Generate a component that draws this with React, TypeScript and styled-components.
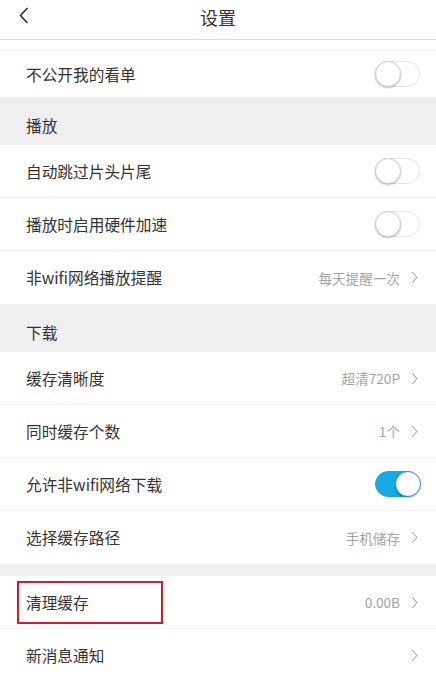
import React from 'react';
import styled, { createGlobalStyle } from 'styled-components';

// Settings screen: one row per option, grouped under grey section headers

type Row =
  | { kind: 'toggle'; label: string; on: boolean }
  | { kind: 'link'; label: string; value?: string; marked?: boolean };

const playRows: Row[] = [
  { kind: 'toggle', label: '自动跳过片头片尾', on: false },
  { kind: 'toggle', label: '播放时启用硬件加速', on: false },
  { kind: 'link', label: '非wifi网络播放提醒', value: '每天提醒一次' },
];

const downloadRows: Row[] = [
  { kind: 'link', label: '缓存清晰度', value: '超清720P' },
  { kind: 'link', label: '同时缓存个数', value: '1个' },
  { kind: 'toggle', label: '允许非wifi网络下载', on: true },
  { kind: 'link', label: '选择缓存路径', value: '手机储存' },
];

const otherRows: Row[] = [
  { kind: 'link', label: '清理缓存', value: '0.00B', marked: true },
  { kind: 'link', label: '新消息通知' },
];

export default function App() {
  const renderRow = (row: Row, last: boolean) => (
    <ItemRow key={row.label} $last={last}>
      <ItemLabel>{row.label}</ItemLabel>
      {row.kind === 'toggle' ? (
        <Switch $on={row.on}>
          <Knob $on={row.on} />
        </Switch>
      ) : (
        <ItemRight>
          {row.value && <ItemValue>{row.value}</ItemValue>}
          <Chevron width="7" height="13" viewBox="0 0 7 13">
            <path d="M1 1l5 5.5L1 12" fill="none" stroke="#a8a8a8" strokeWidth="1.1" />
          </Chevron>
        </ItemRight>
      )}
      {row.kind === 'link' && row.marked && <MarkBox />}
    </ItemRow>
  );

  return (
    <>
      <GlobalStyle />
      <Page>
        <TopBar>
          <BackButton width="10" height="17" viewBox="0 0 10 17">
            <path d="M8.5 1L1.5 8.5l7 7.5" fill="none" stroke="#333" strokeWidth="1.6" />
          </BackButton>
          <Title>设置</Title>
        </TopBar>

        <Stub />
        <ItemRow $last $short>
          <ItemLabel>不公开我的看单</ItemLabel>
          <Switch $on={false}>
            <Knob $on={false} />
          </Switch>
        </ItemRow>

        <SectionHeader>播放</SectionHeader>
        {playRows.map((r, i) => renderRow(r, i === playRows.length - 1))}

        <SectionHeader>下载</SectionHeader>
        {downloadRows.map((r, i) => renderRow(r, i === downloadRows.length - 1))}

        <Spacer />
        {otherRows.map((r, i) => renderRow(r, i === otherRows.length - 1))}
      </Page>
    </>
  );
}

const GlobalStyle = createGlobalStyle`
  html, body {
    margin: 0;
    padding: 0;
    background: #ffffff;
  }
  body {
    font-family: "Noto Sans CJK SC", "Noto Sans", "Liberation Sans", sans-serif;
    color: #333333;
  }
`;

const Page = styled.div`
  width: 436px;
  height: 681px;
  overflow: hidden;
  display: flex;
  flex-direction: column;
  background: #ffffff;
`;

const TopBar = styled.header`
  flex: 0 0 40px;
  box-sizing: border-box;
  display: flex;
  align-items: center;
  justify-content: center;
  position: relative;
  padding-bottom: 5px;
  border-bottom: 1px solid #dedede;
  background: #ffffff;
`;

const BackButton = styled.svg`
  position: absolute;
  left: 19px;
  top: 7px;
`;

const Title = styled.h1`
  margin: 0;
  font-size: 18px;
  font-weight: 400;
  color: #333333;
  line-height: 1;
`;

const Stub = styled.div`
  flex: 0 0 11px;
  box-sizing: border-box;
  border-bottom: 1px solid #f0f0f0;
`;

const ItemRow = styled.div<{ $last?: boolean; $short?: boolean }>`
  flex: 0 0 ${({ $short }) => ($short ? 46 : 53)}px;
  position: relative;
  display: flex;
  align-items: center;
  justify-content: space-between;
  padding: 0 18px 0 26px;
  box-sizing: border-box;
  background: #ffffff;
  border-bottom: ${({ $last }) => ($last ? 'none' : '1px solid #f1f1f1')};
`;

const ItemLabel = styled.span`
  font-size: 15.7px;
  color: #333333;
`;

const ItemRight = styled.div`
  display: flex;
  align-items: center;
  gap: 11px;
`;

const ItemValue = styled.span`
  font-size: 13.6px;
  color: #a3a3a3;
`;

const Chevron = styled.svg`
  display: block;
`;

const Switch = styled.div<{ $on: boolean }>`
  width: 45px;
  height: 26px;
  border-radius: 13px;
  box-sizing: border-box;
  position: relative;
  background: ${({ $on }) => ($on ? '#17a9e1' : '#ffffff')};
  border: 1px solid ${({ $on }) => ($on ? '#17a9e1' : '#e4e4e4')};
  margin-right: -2px;
`;

const Knob = styled.div<{ $on: boolean }>`
  position: absolute;
  top: -1px;
  left: ${({ $on }) => ($on ? '19px' : '-1px')};
  width: 26px;
  height: 26px;
  border-radius: 50%;
  box-sizing: border-box;
  background: #ffffff;
  border: 1px solid ${({ $on }) => ($on ? '#3b8fb0' : '#d0d0d0')};
  box-shadow: 0 1px 2px rgba(0, 0, 0, 0.25);
`;

const SectionHeader = styled.div`
  flex: 0 0 48px;
  box-sizing: border-box;
  display: flex;
  align-items: flex-end;
  padding: 0 26px 8px;
  background: #efefef;
  font-size: 15.7px;
  color: #333333;
`;

const Spacer = styled.div`
  flex: 0 0 12px;
  background: #efefef;
`;

const MarkBox = styled.div`
  position: absolute;
  left: 17px;
  top: 5px;
  width: 146px;
  height: 43px;
  box-sizing: border-box;
  border: 2px solid #c8202c;
  pointer-events: none;
`;
